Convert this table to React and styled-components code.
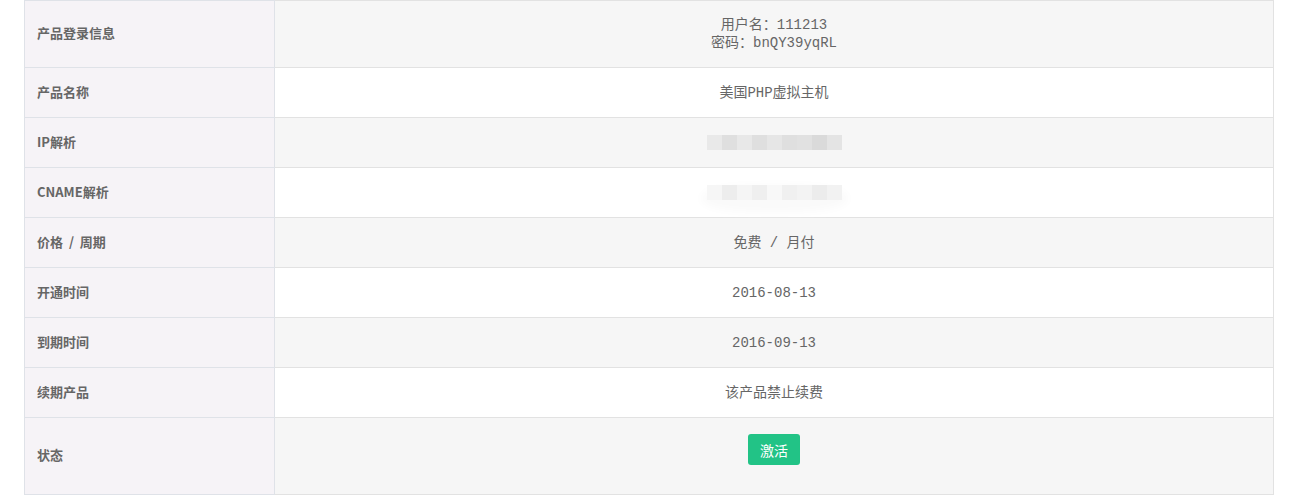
import styled, { createGlobalStyle } from 'styled-components'

const Global = createGlobalStyle`
  body {
    margin: 0;
    background: #fff;
  }
`

const Wrap = styled.div`
  padding: 0 27px 0 24px;
`

const Table = styled.table`
  width: 1250px;
  border-collapse: collapse;
  border: 1px solid #dfe2e8;
`

const Row = styled.tr`
  height: ${p => p.h}px;
`

const Label = styled.th`
  width: 237px;
  padding: 0 0 3px 12px;
  text-align: left;
  background: #f6f3f7;
  border: 1px solid #dfe2e8;
  color: #666;
  font-family: "Noto Sans CJK SC", sans-serif;
  font-size: 13px;
  font-weight: bold;
  white-space: pre;
`

const Value = styled.td`
  text-align: center;
  vertical-align: middle;
  background: ${p => (p.alt ? '#f6f6f6' : '#fff')};
  border: 1px solid #e2e2e2;
  border-left-color: #dfe2e8;
  color: #666;
  font-family: "Liberation Mono", "Noto Sans CJK SC", monospace;
  font-size: 14px;
  line-height: 18px;
  padding: ${p => p.pad || '0'};
`

const Masked = styled.div`
  display: inline-flex;
  vertical-align: middle;
  border-radius: ${p => (p.glow ? '40%' : '0')};
  box-shadow: ${p => (p.glow ? '0 6px 10px 6px #fafafa' : 'none')};
`

const Pixel = styled.span`
  width: 15px;
  height: 15px;
  background: ${p => p.c};
`

const ActiveBtn = styled.button`
  width: 52px;
  height: 31px;
  border: none;
  border-radius: 3px;
  background: #22c386;
  color: #fff;
  font-family: "Noto Sans CJK SC", sans-serif;
  font-size: 14px;
  cursor: pointer;
`

const ipShades = ['#e9e9e9', '#dfdfdf', '#e8e8e8', '#dfdfdf', '#e6e6e6', '#dfdfdf', '#e1e1e1', '#dadada', '#e4e4e4']
const cnameShades = ['#f6f6f6', '#ededed', '#f5f5f5', '#efefef', '#f8f8f8', '#f0f0f0', '#f3f3f3', '#ececec', '#f2f2f2']

export default function App() {
  return (
    <Wrap>
      <Global />
      <Table>
        <tbody>
          <Row h={67}>
            <Label>产品登录信息</Label>
            <Value alt>用户名：111213<br />密码：bnQY39yqRL</Value>
          </Row>
          <Row h={50}>
            <Label>产品名称</Label>
            <Value>美国PHP虚拟主机</Value>
          </Row>
          <Row h={50}>
            <Label>IP解析</Label>
            <Value alt>
              <Masked>{ipShades.map((c, i) => <Pixel key={i} c={c} />)}</Masked>
            </Value>
          </Row>
          <Row h={50}>
            <Label>CNAME解析</Label>
            <Value>
              <Masked glow>{cnameShades.map((c, i) => <Pixel key={i} c={c} />)}</Masked>
            </Value>
          </Row>
          <Row h={50}>
            <Label>{'价格  /  周期'}</Label>
            <Value alt>免费 / 月付</Value>
          </Row>
          <Row h={50}>
            <Label>开通时间</Label>
            <Value>2016-08-13</Value>
          </Row>
          <Row h={50}>
            <Label>到期时间</Label>
            <Value alt>2016-09-13</Value>
          </Row>
          <Row h={50}>
            <Label>续期产品</Label>
            <Value>该产品禁止续费</Value>
          </Row>
          <Row h={77}>
            <Label>状态</Label>
            <Value alt pad="0 0 13px">
              <ActiveBtn>激活</ActiveBtn>
            </Value>
          </Row>
        </tbody>
      </Table>
    </Wrap>
  )
}
